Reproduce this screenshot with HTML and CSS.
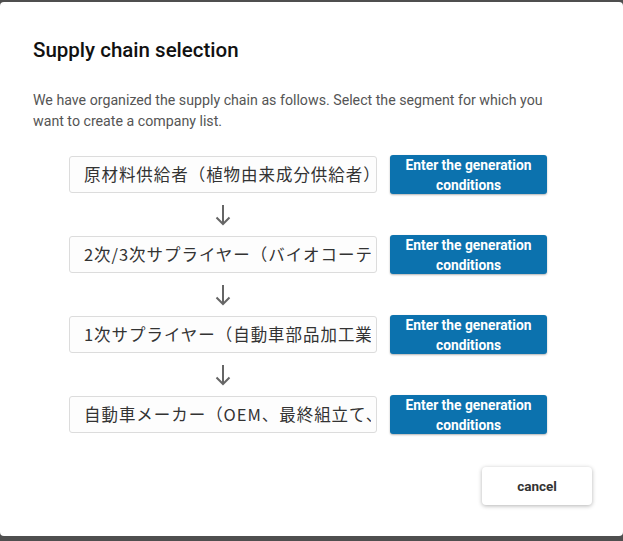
FILE: index.html
```html
<!DOCTYPE html>
<html lang="en">
<head>
<meta charset="utf-8">
<link rel="stylesheet" href="styles.css">
</head>
<body>
<div class="dialog">
  <h1 class="title">Supply chain selection</h1>
  <p class="desc">We have organized the supply chain as follows. Select the segment for which you want to create a company list.</p>
  <div class="chain">
    <div class="row">
      <div class="field"><span class="val">原材料供給者（植物由来成分供給者）</span></div>
      <button class="gen">Enter the generation conditions</button>
    </div>
    <div class="arrow"><svg width="16" height="22" viewBox="0 0 16 22"><path d="M8 1V20M1.5 13.5L8 20L14.5 13.5" fill="none" stroke="#666" stroke-width="2"/></svg></div>
    <div class="row">
      <div class="field"><span class="val">2次/3次サプライヤー（バイオコーティング材供給者）</span></div>
      <button class="gen">Enter the generation conditions</button>
    </div>
    <div class="arrow"><svg width="16" height="22" viewBox="0 0 16 22"><path d="M8 1V20M1.5 13.5L8 20L14.5 13.5" fill="none" stroke="#666" stroke-width="2"/></svg></div>
    <div class="row">
      <div class="field"><span class="val">1次サプライヤー（自動車部品加工業者）</span></div>
      <button class="gen">Enter the generation conditions</button>
    </div>
    <div class="arrow"><svg width="16" height="22" viewBox="0 0 16 22"><path d="M8 1V20M1.5 13.5L8 20L14.5 13.5" fill="none" stroke="#666" stroke-width="2"/></svg></div>
    <div class="row">
      <div class="field"><span class="val">自動車メーカー（OEM、最終組立て、販売）</span></div>
      <button class="gen">Enter the generation conditions</button>
    </div>
  </div>
  <div class="actions">
    <button class="cancel">cancel</button>
  </div>
</div>
</body>
</html>
```

FILE: styles.css
```css
html, body {
  margin: 0;
  padding: 0;
}
body {
  background: #4f4f4f;
  width: 623px;
  height: 541px;
  overflow: hidden;
  font-family: Roboto, "Noto Sans CJK JP", sans-serif;
}
.dialog {
  margin-top: 2px;
  height: 534px;
  background: #fff;
  border-radius: 4px;
  box-sizing: border-box;
  padding: 35px 0 0 33px;
  display: flex;
  flex-direction: column;
}
.title {
  margin: 0;
  font-size: 20.5px;
  font-weight: 500;
  line-height: 26px;
  color: #111;
}
.desc {
  margin: 27px 0 0;
  width: 535px;
  font-size: 14.2px;
  line-height: 21px;
  color: #555;
}
.chain {
  margin: 23px 0 0 36px;
  display: flex;
  flex-direction: column;
  width: 478px;
}
.row {
  display: flex;
  align-items: center;
  gap: 13px;
  height: 39px;
}
.field {
  width: 308px;
  height: 37px;
  box-sizing: border-box;
  border: 1px solid #dcdcdc;
  border-radius: 3px;
  background: #fdfdfd;
  padding: 0 5px 0 14px;
  overflow: hidden;
}
.val {
  display: block;
  width: 100%;
  overflow: hidden;
  white-space: nowrap;
  font-family: "Noto Sans CJK JP", sans-serif;
  font-size: 16.5px;
  letter-spacing: 0.95px;
  line-height: 35px;
  color: #333;
}
.gen {
  width: 157px;
  height: 39px;
  border: none;
  border-radius: 3px;
  background: #0c72ae;
  box-shadow: 0 1px 2px rgba(0,0,0,0.3);
  color: #fff;
  font-family: Roboto, sans-serif;
  font-weight: 700;
  font-size: 13.8px;
  line-height: 20px;
  padding: 0 4px;
}
.arrow {
  width: 308px;
  height: 41px;
  display: flex;
  justify-content: center;
  align-items: center;
}
.arrow svg {
  display: block;
}
.actions {
  margin-top: auto;
  margin-bottom: 31px;
  display: flex;
  justify-content: flex-end;
  padding-right: 31px;
}
.cancel {
  width: 110px;
  height: 38px;
  border: none;
  border-radius: 4px;
  background: #fff;
  box-shadow: 0 1px 4px rgba(0,0,0,0.3);
  color: #333;
  font-family: Roboto, sans-serif;
  font-weight: 700;
  font-size: 13.5px;
}
```
